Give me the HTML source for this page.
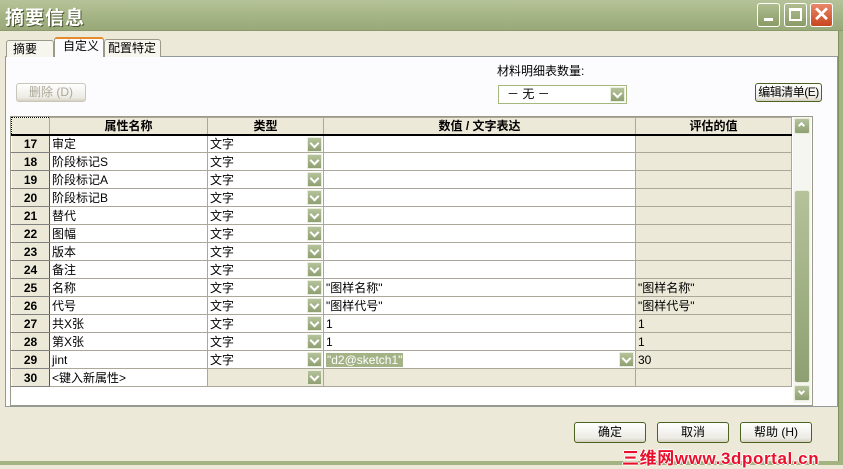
<!DOCTYPE html>
<html><head><meta charset="utf-8"><style>
*{box-sizing:border-box;margin:0;padding:0}
body{width:843px;height:465px;overflow:hidden;background:#ece9d8;font-family:"Liberation Sans","Noto Sans CJK SC","WenQuanYi Zen Hei",sans-serif;font-size:12px;color:#000;position:relative}
.abs{position:absolute}
.title{left:0;top:0;width:843px;height:31px;background:linear-gradient(#b6c39a,#a6b585 50%,#98a878);border-bottom:1px solid #8a9a6a}
.title span{position:absolute;left:5px;top:3px;font-size:19px;font-weight:bold;color:#fff;text-shadow:1px 1px 0 #4a5530;letter-spacing:1px}
.wb{top:3px;width:23px;height:24px;border:1px solid #fff;border-radius:3px;background:linear-gradient(#b0bd90,#8a9b66)}
.rb{right:0;top:31px;width:5px;height:434px;background:#a4b382;border-left:1px solid #7e8e5e}
.tab{top:39px;height:18px;background:#f6f5ee;border:1px solid #9a9a8a;border-bottom:none;border-radius:3px 3px 0 0;font-size:12px;line-height:16px;padding-left:6px;white-space:nowrap}
.panel{left:5px;top:56px;width:833px;height:351px;background:#fcfcfe;border:1px solid #919b9c}
.btn{height:21px;border:1px solid #4a6320;border-radius:3px;background:linear-gradient(#fff,#ecebe4 80%,#d6d0c0);text-align:center;line-height:19px;font-size:12px;white-space:nowrap}
.grid{left:10px;top:116px;width:803px;height:290px;background:#fff;border:1px solid #9a9a8a}
table{border-collapse:collapse;position:absolute;left:0;top:0;table-layout:fixed}
td{height:18px;border:1px solid #aca899;padding:0 0 0 2px;white-space:nowrap;overflow:hidden;position:relative;font-size:12px;line-height:16px}
th{height:17px;background:#ece9d8;border:1px solid #aca899;border-bottom:2px solid #000;font-weight:bold;font-size:12px;line-height:14px;padding:0}
td.n{background:#ece9d8;font-weight:bold;text-align:center;border-top:1px solid #fff;border-left:1px solid #fff;border-right:1px solid #555;border-bottom:1px solid #808080;padding:0}
td.g{background:#ece9d8}
.dd{position:absolute;right:1px;top:1px;width:15px;height:15px;background:linear-gradient(#b5c29a,#8ea072);border:1px solid #e8eddc}
.dd:after{content:"";position:absolute;left:3px;top:2px;width:5px;height:5px;border-right:2px solid #fff;border-bottom:2px solid #fff;transform:rotate(45deg)}
.sb{left:793px;top:117px;width:18px;height:286px;background:#f6f6f0}
.sbb{position:absolute;left:1px;width:16px;height:16px;border:1px solid #e8eddc;border-radius:2px;background:linear-gradient(#b5c29a,#8ea072)}
</style></head><body>
<div class="abs title"><span>摘要信息</span></div>
<div class="abs wb" style="left:757px"><div class="abs" style="left:6px;top:14px;width:9px;height:3px;background:#fff"></div></div>
<div class="abs wb" style="left:784px"><div class="abs" style="left:4px;top:4px;width:13px;height:13px;border:2px solid #fff;border-top-width:3px"></div></div>
<div class="abs wb" style="left:810px;background:linear-gradient(#e8876a,#c8451f);color:#fff;font-size:20px;font-weight:bold;text-align:center;line-height:22px">✕</div>
<div class="abs rb"></div>
<div class="abs" style="left:0;top:461px;width:843px;height:4px;background:#a4b382"></div>

<div class="abs panel"></div>
<div class="abs tab" style="left:6px;width:48px;top:40px;height:17px">摘要</div>
<div class="abs tab" style="left:104px;width:57px;padding-left:3px">配置特定</div>
<div class="abs tab" style="left:54px;width:50px;top:37px;height:20px;background:#fcfcfe;border-top:2px solid #e68b2c;border-bottom:none;line-height:15px;padding-left:8px">自定义</div>

<div class="abs btn" style="left:16px;top:83px;width:70px;height:19px;color:#aca899;border-color:#c9c7ba;line-height:17px">删除 (D)</div>
<div class="abs" style="left:497px;top:62px">材料明细表数量:</div>
<div class="abs" style="left:498px;top:85px;width:129px;height:19px;border:1px solid #a5b97f;background:#fff;line-height:17px;padding-left:8px">－ 无 －
<div class="dd" style="top:1px;right:1px"></div></div>
<div class="abs btn" style="left:755px;top:83px;width:67px;height:19px;line-height:17px;letter-spacing:-0.5px">编辑清单(E)</div>

<div class="abs grid">
<table>
<colgroup><col style="width:38px"><col style="width:158px"><col style="width:116px"><col style="width:312px"><col style="width:156px"></colgroup>
<tr><th style="border:1px dotted #000;border-bottom:2px solid #000"></th><th>属性名称</th><th>类型</th><th>数值 / 文字表达</th><th>评估的值</th></tr>
<tr><td class="n">17</td><td>审定</td><td>文字<i class="dd"></i></td><td></td><td class="g"></td></tr>
<tr><td class="n">18</td><td>阶段标记S</td><td>文字<i class="dd"></i></td><td></td><td class="g"></td></tr>
<tr><td class="n">19</td><td>阶段标记A</td><td>文字<i class="dd"></i></td><td></td><td class="g"></td></tr>
<tr><td class="n">20</td><td>阶段标记B</td><td>文字<i class="dd"></i></td><td></td><td class="g"></td></tr>
<tr><td class="n">21</td><td>替代</td><td>文字<i class="dd"></i></td><td></td><td class="g"></td></tr>
<tr><td class="n">22</td><td>图幅</td><td>文字<i class="dd"></i></td><td></td><td class="g"></td></tr>
<tr><td class="n">23</td><td>版本</td><td>文字<i class="dd"></i></td><td></td><td class="g"></td></tr>
<tr><td class="n">24</td><td>备注</td><td>文字<i class="dd"></i></td><td></td><td class="g"></td></tr>
<tr><td class="n">25</td><td>名称</td><td>文字<i class="dd"></i></td><td>"图样名称"</td><td class="g">"图样名称"</td></tr>
<tr><td class="n">26</td><td>代号</td><td>文字<i class="dd"></i></td><td>"图样代号"</td><td class="g">"图样代号"</td></tr>
<tr><td class="n">27</td><td>共X张</td><td>文字<i class="dd"></i></td><td>1</td><td class="g">1</td></tr>
<tr><td class="n">28</td><td>第X张</td><td>文字<i class="dd"></i></td><td>1</td><td class="g">1</td></tr>
<tr><td class="n">29</td><td>jint</td><td>文字<i class="dd"></i></td><td><span style="background:#a4b386;color:#fff;padding:0 1px">"d2@sketch1"</span><i class="dd"></i></td><td class="g">30</td></tr>
<tr><td class="n">30</td><td>&lt;键入新属性&gt;</td><td class="g"><i class="dd"></i></td><td class="g"></td><td class="g"></td></tr>
</table>
</div>
<div class="abs sb">
<div class="sbb" style="top:1px"></div>
<div class="abs" style="left:6px;top:6px;width:5px;height:5px;border-left:2px solid #fff;border-top:2px solid #fff;transform:rotate(45deg)"></div>
<div class="sbb" style="top:73px;height:193px;border-radius:3px"></div>
<div class="sbb" style="top:268px"></div>
<div class="abs" style="left:6px;top:272px;width:5px;height:5px;border-right:2px solid #fff;border-bottom:2px solid #fff;transform:rotate(45deg)"></div>
</div>

<div class="abs btn" style="left:574px;top:422px;width:72px">确定</div>
<div class="abs btn" style="left:657px;top:422px;width:72px">取消</div>
<div class="abs btn" style="left:740px;top:422px;width:72px">帮助 (H)</div>
<div class="abs" style="left:622px;top:444px;font-size:17px;font-weight:bold;color:#e8102a;text-shadow:1px 0 #fff,-1px 0 #fff,0 1px #fff,0 -1px #fff;letter-spacing:0.6px;white-space:nowrap">三维网www.3dportal.cn</div>
</body></html>
